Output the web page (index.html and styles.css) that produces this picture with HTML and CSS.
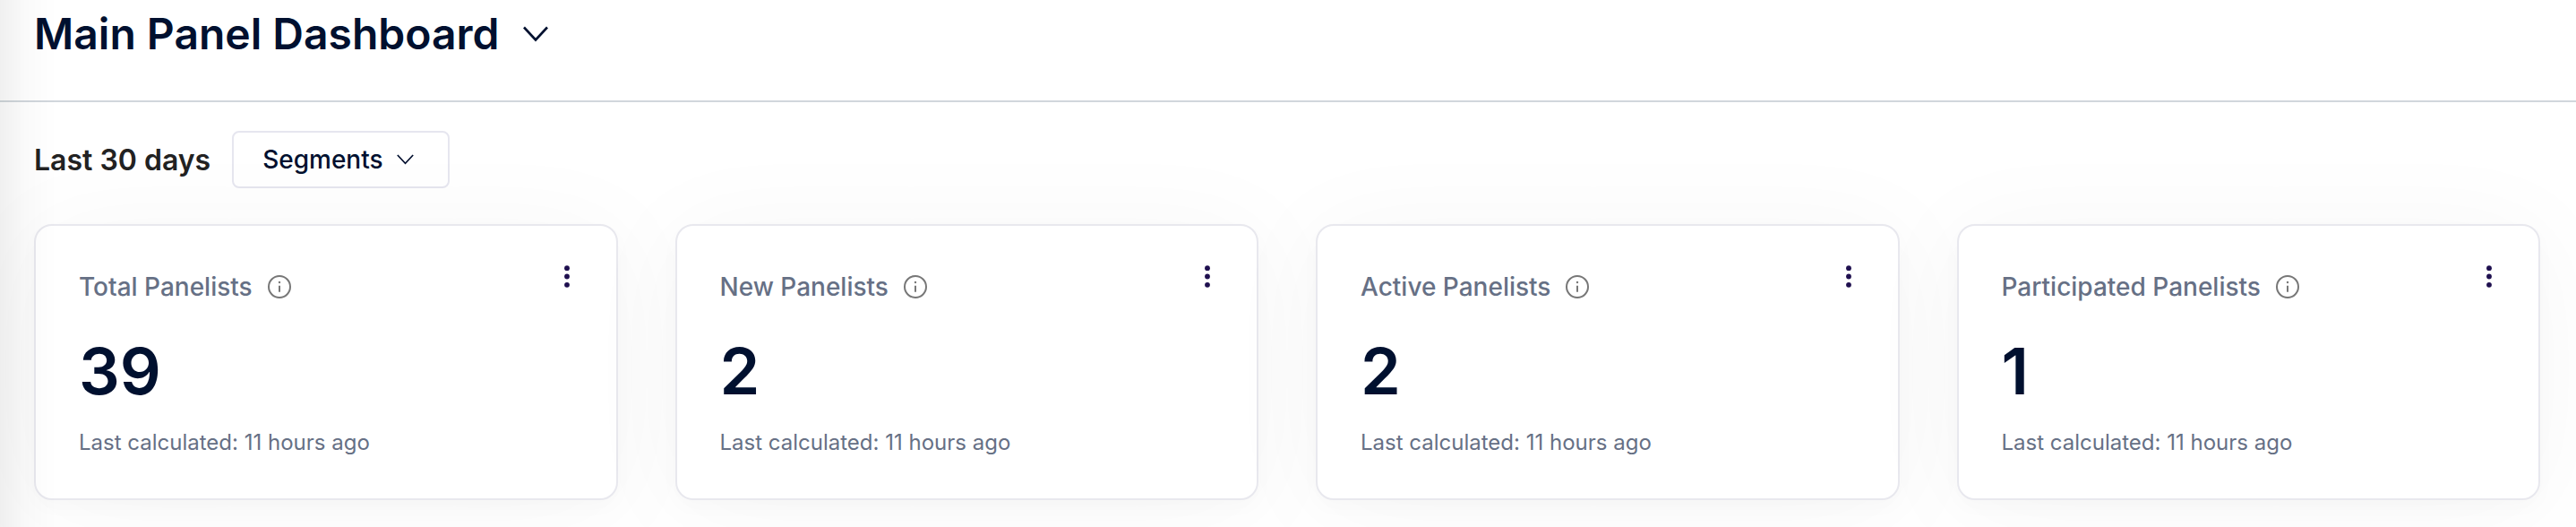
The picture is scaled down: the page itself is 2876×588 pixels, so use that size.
FILE: index.html
```html
<!DOCTYPE html>
<html lang="en">
<head>
    <meta charset="UTF-8">
    <meta name="viewport" content="width=device-width, initial-scale=1.0">
    <title>Main Panel Dashboard</title>
    <link rel="stylesheet" href="styles.css">
</head>
<body>
    <!-- shared icons -->
    <svg class="sprite" aria-hidden="true">
        <symbol id="chevron" viewBox="0 0 28 18">
            <path d="M1 1.5L14 15.5L27 1.5" fill="none" stroke="currentColor" stroke-width="2.6"/>
        </symbol>
        <symbol id="info" viewBox="0 0 26 26">
            <circle cx="13" cy="13" r="12" fill="none" stroke="currentColor" stroke-width="2"/>
            <circle cx="13" cy="8" r="1.2" fill="currentColor"/>
            <path d="M13 11.7V18.7" stroke="currentColor" stroke-width="2"/>
        </symbol>
        <symbol id="dots" viewBox="0 0 6 25">
            <circle cx="3" cy="3.2" r="2.9" fill="currentColor"/>
            <circle cx="3" cy="12.5" r="2.9" fill="currentColor"/>
            <circle cx="3" cy="21.8" r="2.9" fill="currentColor"/>
        </symbol>
    </svg>

    <header class="page-header">
        <h1>Main Panel Dashboard</h1>
        <button class="title-toggle" type="button" aria-label="Switch dashboard">
            <svg><use href="#chevron"/></svg>
        </button>
    </header>

    <main class="content">
        <div class="filters">
            <h2>Last 30 days</h2>
            <button class="segments" type="button">
                Segments
                <svg><use href="#chevron"/></svg>
            </button>
        </div>

        <div class="cards">
            <section class="card">
                <div class="card-info">
                    <div class="card-title">
                        <h3>Total Panelists</h3>
                        <button class="info" type="button" aria-label="About total panelists"><svg><use href="#info"/></svg></button>
                    </div>
                    <p class="value">39</p>
                    <p class="updated">Last calculated: 11 hours ago</p>
                </div>
                <button class="menu" type="button" aria-label="Total panelists menu"><svg><use href="#dots"/></svg></button>
            </section>
            <section class="card">
                <div class="card-info">
                    <div class="card-title">
                        <h3>New Panelists</h3>
                        <button class="info" type="button" aria-label="About new panelists"><svg><use href="#info"/></svg></button>
                    </div>
                    <p class="value">2</p>
                    <p class="updated">Last calculated: 11 hours ago</p>
                </div>
                <button class="menu" type="button" aria-label="New panelists menu"><svg><use href="#dots"/></svg></button>
            </section>
            <section class="card">
                <div class="card-info">
                    <div class="card-title">
                        <h3>Active Panelists</h3>
                        <button class="info" type="button" aria-label="About active panelists"><svg><use href="#info"/></svg></button>
                    </div>
                    <p class="value">2</p>
                    <p class="updated">Last calculated: 11 hours ago</p>
                </div>
                <button class="menu" type="button" aria-label="Active panelists menu"><svg><use href="#dots"/></svg></button>
            </section>
            <section class="card">
                <div class="card-info">
                    <div class="card-title">
                        <h3>Participated Panelists</h3>
                        <button class="info" type="button" aria-label="About participated panelists"><svg><use href="#info"/></svg></button>
                    </div>
                    <p class="value">1</p>
                    <p class="updated">Last calculated: 11 hours ago</p>
                </div>
                <button class="menu" type="button" aria-label="Participated panelists menu"><svg><use href="#dots"/></svg></button>
            </section>
        </div>
    </main>
</body>
</html>
```
FILE: styles.css
```css
* {
    box-sizing: border-box;
}
body {
    margin: 0;
    min-height: 100vh;
    font-family: Inter, Arial, sans-serif;
    background: #fff;
    color: #00102f;
}
/* shadow that falls on the page from the left edge */
body::before {
    content: "";
    position: fixed;
    top: 0;
    bottom: 0;
    left: 0;
    width: 64px;
    background: linear-gradient(90deg, rgba(0, 0, 0, 0.06) 0%, rgba(0, 0, 0, 0.02) 45%, rgba(0, 0, 0, 0) 100%);
    pointer-events: none;
    z-index: 10;
}
h1, h2, h3, p {
    margin: 0;
}
button {
    padding: 0;
    border: none;
    background: none;
    font-family: inherit;
    color: inherit;
    cursor: pointer;
}
svg {
    display: block;
}
.sprite {
    position: absolute;
    width: 0;
    height: 0;
}
.page-header {
    display: flex;
    align-items: center;
    gap: 26px;
    padding: 8px 38px 44px;
    border-bottom: 2px solid #d1d7dc;
}
.page-header h1 {
    font-size: 48px;
    font-weight: 600;
    line-height: 60px;
}
.title-toggle svg {
    width: 28px;
    height: 18px;
}
.content {
    padding: 32px 40px 30px 38px;
}
.filters {
    display: flex;
    align-items: center;
    gap: 24px;
    margin-bottom: 40px;
}
.filters h2 {
    font-size: 32px;
    font-weight: 600;
    color: #222;
}
.segments {
    display: flex;
    align-items: center;
    gap: 15px;
    height: 64px;
    padding: 0 38px 0 32px;
    border: 2px solid #e6e6ef;
    border-radius: 8px;
    background: #fff;
    font-size: 28px;
    font-weight: 500;
}
.segments svg {
    width: 19px;
    height: 12px;
}
.cards {
    display: grid;
    grid-template-columns: repeat(4, 1fr);
    gap: 64px;
}
.card {
    display: flex;
    justify-content: space-between;
    align-items: flex-start;
    padding: 44px 46px 46px 48px;
    border: 2px solid #e8e8ee;
    border-radius: 20px;
    background: #fff;
    box-shadow: 0 8px 24px rgba(0, 0, 0, 0.02), 0 8px 120px rgba(0, 0, 0, 0.04);
}
.card-title {
    display: flex;
    align-items: center;
    gap: 17px;
    margin: 2px 0 28px;
    color: #667085;
}
.card-title h3 {
    font-size: 28px;
    font-weight: 500;
    line-height: 44px;
}
.info {
    color: #777;
}
.info svg {
    width: 26px;
    height: 26px;
}
.value {
    margin-bottom: 20px;
    font-size: 72px;
    font-weight: 600;
    line-height: 88px;
}
.updated {
    font-size: 24px;
    line-height: 32px;
    color: #667085;
}
.menu {
    padding: 0 6px;
    color: #1f104f;
}
.menu svg {
    width: 6px;
    height: 25px;
}
```
